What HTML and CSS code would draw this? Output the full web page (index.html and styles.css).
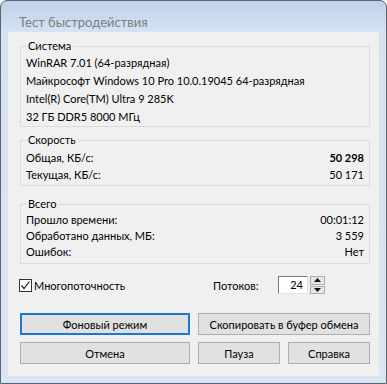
FILE: index.html
```html
<!DOCTYPE html>
<html lang="ru">
<head>
    <meta charset="UTF-8">
    <title>Тест быстродействия</title>
    <link rel="stylesheet" href="styles.css">
</head>
<body>

<div class="window">
    <div class="titlebar">Тест быстродействия</div>
    <div class="client">
        <fieldset class="group group-system">
            <legend>Система</legend>
            <div class="line">WinRAR 7.01 (64-разрядная)</div>
            <div class="line">Майкрософт Windows 10 Pro 10.0.19045 64-разрядная</div>
            <div class="line">Intel(R) Core(TM) Ultra 9 285K</div>
            <div class="line">32 ГБ DDR5 8000 МГц</div>
        </fieldset>

        <fieldset class="group group-speed">
            <legend>Скорость</legend>
            <div class="row"><span>Общая, КБ/с:</span><b>50 298</b></div>
            <div class="row"><span>Текущая, КБ/с:</span><span>50 171</span></div>
        </fieldset>

        <fieldset class="group group-total">
            <legend>Всего</legend>
            <div class="row"><span>Прошло времени:</span><span>00:01:12</span></div>
            <div class="row"><span>Обработано данных, МБ:</span><span>3 559</span></div>
            <div class="row"><span>Ошибок:</span><span>Нет</span></div>
        </fieldset>

        <div class="options">
            <label class="check">
                <span class="box">
                    <svg width="11" height="11" viewBox="0 0 11 11"><path d="M1.5 5.5 L4 8.5 L9.5 1.5" fill="none" stroke="#222" stroke-width="1.2"/></svg>
                </span>
                Многопоточность
            </label>
            <div class="threads">
                <span class="threads-label">Потоков:</span>
                <div class="spin-input">24</div>
                <div class="spin-arrows">
                    <div class="arrow"><svg width="7" height="4" viewBox="0 0 7 4"><path d="M3.5 0 L7 4 L0 4 Z" fill="#111"/></svg></div>
                    <div class="arrow"><svg width="7" height="4" viewBox="0 0 7 4"><path d="M0 0 L7 0 L3.5 4 Z" fill="#111"/></svg></div>
                </div>
            </div>
        </div>

        <div class="buttons">
            <button class="btn btn-default">Фоновый режим</button>
            <button class="btn btn-wide">Скопировать в буфер обмена</button>
            <button class="btn">Отмена</button>
            <button class="btn">Пауза</button>
            <button class="btn">Справка</button>
        </div>
    </div>
</div>

</body>
</html>
```

FILE: styles.css
```css
/* Окно в стиле Windows 7 (упрощённая тема) */
body {
    margin: 0;
    background: #ffffff;
    font-family: Lato, "Noto Sans", sans-serif;
    font-size: 11px;
    color: #000;
}
.window {
    width: 387px;
    height: 384px;
    box-sizing: border-box;
    border: 1px solid #5b6470;
    border-radius: 7px 7px 0 0;
    background: linear-gradient(#bed1e9 0, #d5e2f2 31px, #dbe6f4 100%);
    padding: 0 7px 7px 7px;
    display: flex;
    flex-direction: column;
}
.titlebar {
    height: 31px;
    box-sizing: border-box;
    padding: 11px 0 0 11px;
    line-height: 20px;
    font-size: 13px;
    color: #7b7e82;
}
.client {
    flex: 1;
    background: #f0f0f0;
    padding: 7px 9px 0 12px;
}

/* Группы */
.group {
    margin: 0;
    padding: 0 5px 0 5px;
    border: 1px solid #dcdcdc;
    min-width: 0;
}
.group legend {
    padding: 0 2px;
    line-height: 14px;
}
.group-system {
    padding-top: 1px;
}
.group-system .line {
    line-height: 18px;
}
.group-speed {
    margin-top: 6px;
    padding-top: 2px;
    padding-bottom: 2px;
}
.group-speed .row {
    line-height: 17px;
}
.group-total {
    margin-top: 11px;
    padding-top: 1px;
    padding-bottom: 3px;
}
.group-total .row {
    line-height: 16px;
}
.row {
    display: flex;
    justify-content: space-between;
}
.row b {
    font-weight: 700;
}

/* Многопоточность */
.options {
    display: flex;
    align-items: center;
    height: 20px;
    margin-top: 11px;
}
.check {
    display: flex;
    align-items: center;
    gap: 2px;
    width: 194px;
    margin-left: -1px;
}
.box {
    width: 11px;
    height: 11px;
    border: 1px solid #333;
    background: #fff;
    display: flex;
}
.threads {
    display: flex;
    align-items: center;
}
.threads-label {
    width: 65px;
}
.spin-input {
    width: 30px;
    height: 18px;
    box-sizing: border-box;
    border: 1px solid #7a7a7a;
    border-right-color: #e3e3e3;
    border-bottom-color: #e3e3e3;
    background: #fff;
    text-align: right;
    padding-right: 4px;
    line-height: 16px;
}
.spin-arrows {
    margin-left: 2px;
    width: 15px;
    height: 18px;
    display: flex;
    flex-direction: column;
    gap: 1px;
}
.arrow {
    flex: 1;
    border: 1px solid #adadad;
    background: #e6e6e6;
    display: flex;
    align-items: center;
    justify-content: center;
}

/* Кнопки */
.buttons {
    display: grid;
    grid-template-columns: 170px 82px 82px;
    grid-auto-rows: 22px;
    gap: 7px 8px;
    margin-top: 18px;
}
.btn {
    font-family: inherit;
    font-size: 11px;
    color: #000;
    background: #e1e1e1;
    border: 1px solid #adadad;
    padding: 0;
    margin: 0;
    white-space: nowrap;
}
.btn-default {
    border: 2px solid #1c79d0;
}
.btn-wide {
    grid-column: span 2;
}
```
